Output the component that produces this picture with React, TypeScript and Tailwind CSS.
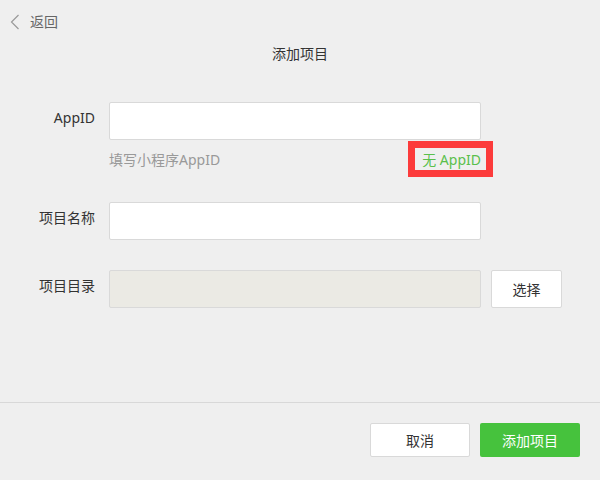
const font = "font-['Noto_Sans','Noto_Sans_CJK_SC',sans-serif]";

function Field({ label, children }: { label: string; children: React.ReactNode }) {
  return (
    <div className="flex items-start gap-[14px]">
      <label className="w-[95px] shrink-0 pt-[6px] text-right text-[14px] leading-[20px] text-[#333]">{label}</label>
      {children}
    </div>
  );
}

function Chevron() {
  return (
    <svg width="10" height="16" viewBox="0 0 10 16" fill="none" className="shrink-0">
      <polyline points="8.5,1 1.5,8 8.5,15" stroke="#9a9a9a" strokeWidth="1.2" />
    </svg>
  );
}

export default function App() {
  return (
    <div className={`flex h-[480px] w-[600px] flex-col bg-[#efefef] ${font}`}>
      {/* back */}
      <div className="flex h-[44px] items-center pl-[10px] pb-[1px]">
        <button className="flex items-center gap-[10px] text-[14px] text-[#666]">
          <Chevron />
          <span>返回</span>
        </button>
      </div>
      <h1 className="text-center text-[14px] leading-[20px] text-[#333]">添加项目</h1>

      {/* form */}
      <div className="mt-[38px] flex flex-col">
        <Field label="AppID">
          <input className="h-[38px] w-[372px] rounded-[2px] border border-[#d9d9d9] bg-white px-2 text-sm outline-none" />
        </Field>
        <div className="ml-[109px] mt-[10px] flex w-[372px] items-center justify-between text-[14px] leading-[20px]">
          <span className="text-[#999]">填写小程序AppID</span>
          <a className="relative mr-0 text-[#5abf4c]">
            无 AppID
            <span className="pointer-events-none absolute -bottom-[7px] -left-[14px] -right-[12px] -top-[9px] border-[7px] border-[#fc3b3b]" />
          </a>
        </div>
        <div className="mt-[32px]">
          <Field label="项目名称">
            <input className="h-[38px] w-[372px] rounded-[2px] border border-[#d9d9d9] bg-white px-2 text-sm outline-none" />
          </Field>
        </div>
        <div className="mt-[30px]">
          <Field label="项目目录">
            <div className="flex items-center gap-[10px]">
              <input disabled className="h-[38px] w-[372px] rounded-[2px] border border-[#d9d9d9] bg-[#ebeae4] px-2 text-sm outline-none" />
              <button className="h-[38px] w-[71px] rounded-[2px] border border-[#d9d9d9] bg-white text-[14px] text-[#333]">选择</button>
            </div>
          </Field>
        </div>
      </div>

      {/* footer */}
      <div className="mt-auto border-t border-[#d8d8d8] pb-[23px] pt-[20px]">
        <div className="flex justify-end gap-[10px] pr-[20px]">
          <button className="h-[34px] w-[100px] rounded-[2px] border border-[#d9d9d9] bg-white text-[14px] text-[#333]">取消</button>
          <button className="h-[34px] w-[100px] rounded-[2px] bg-[#46c23d] text-[14px] text-white">添加项目</button>
        </div>
      </div>
    </div>
  );
}
